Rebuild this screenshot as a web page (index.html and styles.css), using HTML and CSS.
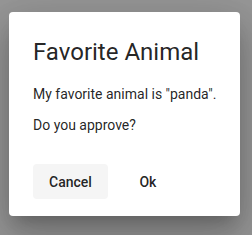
FILE: index.html
```html
<!DOCTYPE html>
<html>
<head>
<meta charset="utf-8">
<link rel="stylesheet" href="styles.css">
</head>
<body>
<div class="backdrop">
  <div class="dialog">
    <h2 class="title">Favorite Animal</h2>
    <div class="content">
      <p class="text">My favorite animal is "panda".</p>
      <p class="text">Do you approve?</p>
    </div>
    <div class="actions">
      <button class="btn btn-filled">Cancel</button>
      <button class="btn">Ok</button>
    </div>
  </div>
</div>
</body>
</html>
```
FILE: styles.css
```css
html, body {
  margin: 0;
  padding: 0;
}
body {
  width: 252px;
  height: 235px;
  overflow: hidden;
  font-family: Roboto, "Liberation Sans", sans-serif;
}
.backdrop {
  width: 252px;
  height: 235px;
  box-sizing: border-box;
  padding: 12px 12px 0 9px;
  background: #979797;
}
.dialog {
  width: 231px;
  height: 204px;
  box-sizing: border-box;
  background: #ffffff;
  border-radius: 4px;
  padding: 24px 24px 0 24px;
  box-shadow: 0 11px 15px -7px rgba(0,0,0,0.2), 0 24px 38px 3px rgba(0,0,0,0.14), 0 9px 46px 8px rgba(0,0,0,0.12);
  color: rgba(0,0,0,0.87);
}
.title {
  margin: 0;
  font-size: 24px;
  line-height: 32px;
  font-weight: 400;
}
.content {
  margin-top: 16px;
}
.text {
  margin: 0 0 11px 0;
  font-size: 14px;
  line-height: 20px;
  white-space: nowrap;
}
.actions {
  display: flex;
  gap: 8px;
  margin-top: 29px;
}
.btn {
  min-width: 64px;
  height: 35px;
  padding: 0 16px;
  border: none;
  border-radius: 4px;
  background: transparent;
  font-family: Roboto, "Liberation Sans", sans-serif;
  font-size: 14px;
  font-weight: 500;
  color: rgba(0,0,0,0.87);
}
.btn-filled {
  background: #f5f5f5;
}
```
